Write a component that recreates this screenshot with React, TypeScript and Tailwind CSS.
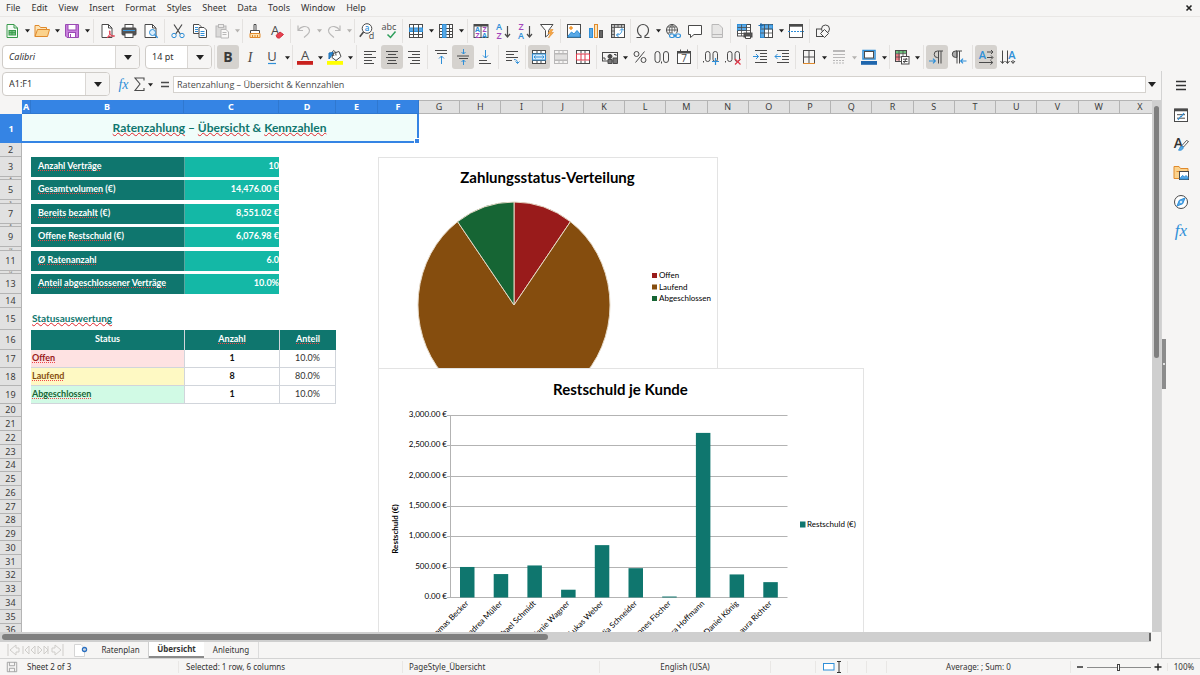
import React from "react";

const INK = "#4a4a4a";
const BLUE = "#2f8fd8";

/* ---------- icon drawings ---------- */

function Ic({ children, faded = false }: { children: React.ReactNode; faded?: boolean }) {
  return (
    <svg
      viewBox="0 0 16 16"
      className={faded ? "size-4 shrink-0 overflow-visible opacity-35" : "size-4 shrink-0 overflow-visible"}
      fill="none"
      stroke={INK}
      strokeWidth="1"
      aria-hidden="true"
    >
      {children}
    </svg>
  );
}

const T = ({ x, y, s = 7, c = INK, children, w = 400 }: any) => (
  <text x={x} y={y} fontSize={s} fill={c} fontWeight={w} stroke="none" textAnchor="middle" fontFamily="Open Sans, sans-serif">
    {children}
  </text>
);

const lines = (list: [number, number, number][]) => list.map(([x1, x2, y], i) => <path key={i} d={`M${x1} ${y}H${x2}`} />);

const I: Record<string, React.ReactNode> = {
  new: (
    <Ic>
      <path d="M3 1.500h7l3.500 3.500v9.500H3z" stroke="#3a9a4c" fill="#f4fbf5" />
      <path d="M10 1.500V5h3.500" stroke="#3a9a4c" />
      <rect x="5" y="7.500" width="6.500" height="4.500" fill="#7cc98a" stroke="#3a9a4c" />
      <path d="M5 9.700h6.500M8 7.500V12" stroke="#3a9a4c" />
    </Ic>
  ),
  open: (
    <Ic>
      <path d="M1 13.500V2.500h4l1.500 2h6V7" stroke="#e08a2c" fill="#fde3b4" />
      <path d="M1 13.500 3.500 6.500h12l-2 7z" stroke="#e08a2c" fill="#fbd28c" />
    </Ic>
  ),
  save: (
    <Ic>
      <path d="M1.500 1.500h13v13H3l-1.500-1.500z" stroke="#9a4bb3" fill="#c97fdd" />
      <rect x="4" y="1.500" width="8" height="5.500" fill="#fff" stroke="#9a4bb3" />
      <rect x="4.500" y="9.500" width="7" height="5" fill="#fff" stroke="#9a4bb3" />
      <path d="M6.500 11v3" stroke="#9a4bb3" />
    </Ic>
  ),
  pdf: (
    <Ic>
      <path d="M3 1.500h6.500L13 5v9.500H3z" fill="#fff" />
      <path d="M9.500 1.500V5H13" />
      <path d="M8 15c2-2 3.500-5 3-7-.8-1-1 2 1 4 1 1 2.500 1.800 3.500 1.200S13 12 8 14.500" stroke="#e0384a" fill="#fff" />
    </Ic>
  ),
  print: (
    <Ic>
      <rect x="4" y="1.500" width="8" height="4" fill="#fff" />
      <rect x="1" y="5" width="14" height="7" rx="1" fill="#555" />
      <path d="M2 7.500h12" stroke="#3d9be0" />
      <rect x="4" y="10" width="8" height="4.500" fill="#fff" />
    </Ic>
  ),
  preview: (
    <Ic>
      <path d="M2 1.500h7.500L13 5v9.500H2z" fill="#fff" />
      <path d="M9.500 1.500V5H13" />
      <circle cx="9.500" cy="9.500" r="3" stroke={BLUE} fill="#dceefb" />
      <path d="m11.700 11.700 3 3" stroke={BLUE} strokeWidth="1.400" />
    </Ic>
  ),
  cut: (
    <Ic>
      <path d="m4 1.500 6.300 9.500M12 1.500 5.700 11" strokeWidth="1.200" />
      <circle cx="4" cy="12.500" r="2.200" stroke={BLUE} />
      <circle cx="12" cy="12.500" r="2.200" stroke={BLUE} />
    </Ic>
  ),
  copy: (
    <Ic>
      <path d="M1.500 1.500h5.500l2 2v7H1.500z" fill="#fff" />
      <path d="M3 4.500h3M3 6.500h3M3 8.500h3" stroke={BLUE} />
      <path d="M7 4.500h5l2.500 2.500v7.500H7z" fill="#fff" />
      <path d="M8.500 8.500h4M8.500 10.500h4M8.500 12.500h4" stroke={BLUE} />
    </Ic>
  ),
  paste: (
    <Ic faded>
      <rect x="2" y="3" width="10" height="11" fill="#aaa" />
      <rect x="4.500" y="1.500" width="5" height="3" fill="#ddd" />
      <path d="M7 6.500h5l2.500 2.500v6H7z" fill="#fff" />
      <path d="M8.500 9.500h4M8.500 11.500h4" />
    </Ic>
  ),
  clone: (
    <Ic>
      <path d="M7 1.500h2v6H7z" fill="#fff" />
      <path d="M3.500 7.500h9v3h-9z" fill="#fff" />
      <path d="M3 10.500h10v4H3z" stroke="#e08a2c" fill="#fde3b4" />
      <path d="M5.500 12v2.500M8 12v2.500M10.500 12v2.500" stroke="#e08a2c" />
    </Ic>
  ),
  clear: (
    <Ic>
      <T x={6} y={11.500} s={13}>A</T>
      <path d="m7 12.500 4-3.500 3.500 2.500-4 3.500h-2z" fill="#e8414f" stroke="#cf2f3f" />
    </Ic>
  ),
  undo: (
    <Ic faded>
      <path d="M2 2.500v5h5M2 7.500C5 3 10 2.500 12.500 5c2.500 3 .5 6-4.500 9.500" strokeWidth="1.200" />
    </Ic>
  ),
  redo: (
    <Ic faded>
      <path d="M14 2.500v5H9M14 7.500C11 3 6 2.500 3.500 5c-2.500 3-.5 6 4.500 9.500" strokeWidth="1.200" />
    </Ic>
  ),
  find: (
    <Ic>
      <circle cx="8" cy="5.500" r="4.800" fill="#fff" />
      <path d="M4.500 9 .8 13.800" strokeWidth="1.600" />
      <T x={8} y={8} s={8} c={BLUE} w={600}>a</T>
      <T x={12.500} y={15.500} s={9}>d</T>
    </Ic>
  ),
  spell: (
    <Ic>
      <T x={8} y={7} s={9}>abc</T>
      <path d="m6.500 11.500 3 3 5-6" stroke="#2e9e5b" strokeWidth="1.500" />
    </Ic>
  ),
  row: (
    <Ic>
      <rect x="1.500" y="1.500" width="13" height="13" fill="#fff" />
      <rect x="1.500" y="5" width="13" height="3.500" fill="#5aa9e6" stroke={BLUE} />
      <path d="M1.500 11.500h13M5.500 1.500v13M10.500 1.500v13" />
    </Ic>
  ),
  col: (
    <Ic>
      <rect x="1.500" y="1.500" width="13" height="13" fill="#fff" />
      <path d="M1.500 5.500h13M1.500 8.500h13M1.500 11.500h13M11.500 1.500v13" />
      <rect x="4.500" y="1.500" width="3.500" height="13" fill="#5aa9e6" stroke={BLUE} />
    </Ic>
  ),
  sort: (
    <Ic>
      <rect x="1" y="1.500" width="14" height="13" fill="#fff" />
      <path d="M1 2.500h14" strokeWidth="2" />
      <path d="M8 2v12.500" />
      <T x={4.500} y={9} s={7} c={BLUE} w={700}>A</T>
      <T x={4.500} y={14.500} s={7} c="#a347ba" w={700}>Z</T>
      <T x={11.500} y={9} s={7} c="#a347ba" w={700}>Z</T>
      <T x={11.500} y={14.500} s={7} c={BLUE} w={700}>A</T>
    </Ic>
  ),
  az: (
    <Ic>
      <T x={4} y={7} s={9} c={BLUE} w={600}>A</T>
      <T x={4} y={15.500} s={9} c="#a347ba" w={600}>Z</T>
      <path d="M12.500 3v11M10 11l2.500 3 2.500-3" strokeWidth="1.200" />
    </Ic>
  ),
  za: (
    <Ic>
      <T x={4} y={7} s={9} c="#a347ba" w={600}>Z</T>
      <T x={4} y={15.500} s={9} c={BLUE} w={600}>A</T>
      <path d="M12.500 3v11M10 11l2.500 3 2.500-3" strokeWidth="1.200" />
    </Ic>
  ),
  filter: (
    <Ic>
      <path d="M1.500 1.500h12.500L9.500 7.500v4l-3 2.500V7.500z" fill="#fff" />
      <path d="M11.500 6.500 9 10.500h2.500L9.500 15l5-5.500H12l2-3z" fill="#f8a945" stroke="#e08a2c" strokeWidth=".6" />
    </Ic>
  ),
  image: (
    <Ic>
      <rect x="1.500" y="1.500" width="13" height="13" fill="#fff" />
      <path d="m2 13 3.500-4 2.500 2 3-3.500L14 11v3H2z" fill="#5aa9e6" stroke={BLUE} />
      <circle cx="5" cy="5" r="1.300" fill="#f8a945" stroke="#f0932b" />
    </Ic>
  ),
  chart: (
    <Ic>
      <rect x="1.500" y="5.500" width="3" height="9" fill="#5aa9e6" stroke={BLUE} />
      <rect x="6.500" y="1.500" width="3" height="13" fill="#fde3b4" stroke="#e08a2c" />
      <rect x="11.500" y="7.500" width="3" height="7" fill="#666" />
    </Ic>
  ),
  pivot: (
    <Ic>
      <rect x="1.500" y="1.500" width="13" height="13" fill="#fff" />
      <path d="M2 2h12v2H4v10H2z" fill="#bbb" stroke="none" />
      <path d="M1.500 4.500h13M4.500 1.500v13M8 1.500v3M11.500 1.500v3M1.500 8h3M1.500 11.500h3" strokeWidth=".8" />
      <path d="M12 6c0 4-2 6-5.500 6M10 7.500 12 5.500l2 2M8.500 10l-2 2 2 2" stroke={BLUE} />
    </Ic>
  ),
  omega: (
    <Ic>
      <path d="M1.500 14.500h4.500v-1.500C3.500 11.500 2.500 9.500 2.500 7a5.500 5.500 0 0 1 11 0c0 2.500-1 4.500-3.500 6v1.500h4.500" strokeWidth="1.200" />
    </Ic>
  ),
  link: (
    <Ic>
      <circle cx="7" cy="7" r="5.500" />
      <path d="M1.500 7h11M7 1.500v11M2.500 4h9M2.500 10h5M7 1.500c-3.500 3-3.500 8 0 11M7 1.500c3.500 3 3 6 2.500 7" strokeWidth=".8" />
      <rect x="4" y="10.500" width="12" height="5" fill="#f6f5f4" stroke="none" />
      <rect x="4.500" y="11" width="5" height="3.500" rx="1.700" stroke={BLUE} strokeWidth="1.200" />
      <rect x="10.500" y="11" width="5" height="3.500" rx="1.700" stroke={BLUE} strokeWidth="1.200" />
      <path d="M8 12.800h4" stroke={BLUE} />
    </Ic>
  ),
  comment: (
    <Ic>
      <path d="M1.500 2.500h13v9H7l-3.500 3v-3h-2z" fill="#fff" />
    </Ic>
  ),
  header: (
    <Ic faded>
      <path d="M3 1.500h7L13.500 5v9.500H3z" fill="#ccc" />
      <path d="M3 11.500h10" />
    </Ic>
  ),
  printrange: (
    <Ic>
      <rect x="1.500" y="1.500" width="13" height="11.500" fill="#fff" />
      <rect x="1.500" y="1.500" width="9" height="6" fill="#5aa9e6" stroke={BLUE} />
      <path d="M1.500 4.500h13M1.500 7.500h13M1.500 10.500h13M5.500 1.500v11.500M10.500 1.500v11.500" strokeWidth=".8" />
      <rect x="8" y="10" width="8" height="4" fill="#555" />
      <path d="M9.500 13h5v2.500h-5z" fill="#fff" />
    </Ic>
  ),
  freeze: (
    <Ic>
      <rect x="2.500" y="1.500" width="12" height="13" fill="#fff" />
      <path d="M2.500 2h12v4h-8v8.500h-4z" fill="#5aa9e6" stroke={BLUE} />
      <path d="M2.500 6h12M2.500 10h12M6.500 1.500v13M10.500 1.500v13" strokeWidth=".8" />
      <path d="M3 0v5M.5 2.500h5" stroke="#1b6db3" />
    </Ic>
  ),
  split: (
    <Ic>
      <rect x="1.500" y="1.500" width="13" height="13" fill="#fff" />
      <path d="M1.500 2.500h13" strokeWidth="2.400" />
      <path d="M0 8.500h16" stroke={BLUE} strokeDasharray="2 1" />
    </Ic>
  ),
  shapes: (
    <Ic>
      <rect x="1.500" y="6" width="8" height="7.500" />
      <circle cx="10.500" cy="6" r="4" fill="#f6f5f4" />
      <path d="m9.500 6.500 4 4-4 4-4-4z" fill="#f6f5f4" />
    </Ic>
  ),
  bold: (
    <Ic>
      <T x={8} y={13} s={14} w={700} c="#3a3a3a">B</T>
    </Ic>
  ),
  italic: (
    <Ic>
      <text x="8" y="13" fontSize="14" fontStyle="italic" textAnchor="middle" fill={INK} stroke="none" fontFamily="Liberation Serif, serif">I</text>
    </Ic>
  ),
  underline: (
    <Ic>
      <T x={8} y={12} s={13}>U</T>
      <path d="M4 14.500h8" stroke={BLUE} strokeWidth="1.200" />
    </Ic>
  ),
  fontcolor: (
    <Ic>
      <T x={8} y={10.500} s={13}>A</T>
      <rect x="0" y="12" width="16" height="3.800" fill="#c9211e" stroke="none" />
    </Ic>
  ),
  highlight: (
    <Ic>
      <path d="m6 4.500 6-2 2 5-5 4-4-3z" fill="#fff" />
      <path d="M9 6.500c0-3-1.500-5-2.500-5S5 4 7 7" />
      <path d="M2 10V4l4-.5-1.500 3L3.500 8z" fill={BLUE} stroke="#1b6db3" />
      <rect x="0" y="12" width="16" height="3.800" fill="#ffff00" stroke="none" />
    </Ic>
  ),
  left: <Ic>{lines([[2, 14, 2.5], [2, 10, 5.5], [2, 14, 8.5], [2, 10, 11.5], [2, 12, 14.5]])}</Ic>,
  center: <Ic>{lines([[2, 14, 2.5], [4, 12, 5.5], [2, 14, 8.5], [4, 12, 11.5], [3, 13, 14.5]])}</Ic>,
  right: <Ic>{lines([[2, 14, 2.5], [6, 14, 5.5], [2, 14, 8.5], [6, 14, 11.5], [4, 14, 14.5]])}</Ic>,
  top: (
    <Ic>
      {lines([[2, 14, 1.5], [4, 14, 4.5]])}
      <path d="M8.500 15V7M6 9.500 8.500 7 11 9.500" stroke={BLUE} />
    </Ic>
  ),
  middle: (
    <Ic>
      {lines([[2, 14, 7], [4, 13, 9.5]])}
      <path d="M8.500 0v5M6.500 3l2 2 2-2M8.500 16v-5M6.500 13l2-2 2 2" stroke={BLUE} />
    </Ic>
  ),
  bottom: (
    <Ic>
      {lines([[2, 10, 11.5], [2, 14, 14.5]])}
      <path d="M8.500 1v8M6 6.500 8.500 9 11 6.500" stroke={BLUE} />
    </Ic>
  ),
  wrap: (
    <Ic>
      {lines([[2, 14, 2.5], [2, 10, 5.5], [2, 14, 8.5], [2, 8, 11.5]])}
      <path d="M10 10.500c2.500 0 3.500 1 3.500 4M11.500 12.500l2 2 2-2" stroke={BLUE} />
    </Ic>
  ),
  merge: (
    <Ic>
      <rect x="1.500" y="1.500" width="13" height="13" fill="#fff" />
      <path d="M1.500 4.500h13M1.500 11.500h13M6 1.500v3M10 1.500v3M6 11.500v3M10 11.500v3" />
      <rect x="1.500" y="5" width="13" height="6" fill="#d8ecfb" stroke={BLUE} />
      <path d="M3 8h10M4.500 6.500 3 8l1.500 1.500M11.500 6.500 13 8l-1.500 1.500" stroke={BLUE} />
    </Ic>
  ),
  mergecells: (
    <Ic faded>
      <rect x="1.500" y="1.500" width="13" height="13" />
      <path d="M1.500 4.500h13M1.500 11.500h13M6 1.500v3M10 1.500v3M6 11.500v3M10 11.500v3" />
      <rect x="1.500" y="5" width="13" height="6" fill="#bbb" />
    </Ic>
  ),
  splitcells: (
    <Ic>
      <rect x="1.500" y="1.500" width="13" height="13" fill="#fff" />
      <path d="M6 1.500v3M10 1.500v3M6 11.500v3M10 11.500v3" />
      <path d="M1.500 5h13v6h-13zM6 5v6M10 5v6" fill="#fff" stroke="#e0384a" />
    </Ic>
  ),
  currency: (
    <Ic>
      <rect x=".5" y="3.500" width="15" height="8.500" />
      <circle cx="8" cy="7.500" r="2" fill={INK} />
      <path d="M2 8v2h2M14 7V5.500h-2" />
      <path d="M6 10.500h4v4H6zM11 9h4.500v5.500H11z" fill="#777" />
    </Ic>
  ),
  percent: (
    <Ic>
      <circle cx="4.500" cy="5" r="2.500" />
      <circle cx="11.500" cy="11" r="2.500" />
      <path d="M12.500 2.500 3.500 13.500" />
    </Ic>
  ),
  number: (
    <Ic>
      <rect x="1" y="2.500" width="5" height="11" rx="2.500" />
      <rect x="9.500" y="2.500" width="5" height="11" rx="2.500" />
      <path d="M7.500 12.500v2" />
    </Ic>
  ),
  date: (
    <Ic>
      <rect x="1.500" y="2.500" width="13" height="12" fill="#fff" />
      <path d="M1.500 3.500h13" strokeWidth="2" />
      <path d="M4.500.5v3M11.500.5v3" />
      <T x={8} y={13} s={10}>7</T>
    </Ic>
  ),
  addDec: (
    <Ic>
      <path d="M.5 12v1.500" />
      <rect x="2.500" y="2.500" width="4.500" height="10" rx="2.200" />
      <rect x="10" y="2.500" width="4.500" height="10" rx="2.200" />
      <path d="M12.500 9v7M9 12.500h7" stroke={BLUE} strokeWidth="1.200" />
    </Ic>
  ),
  delDec: (
    <Ic>
      <path d="M.5 12v1.500" />
      <rect x="2.500" y="2.500" width="4.500" height="10" rx="2.200" />
      <rect x="10" y="2.500" width="4.500" height="10" rx="2.200" />
      <path d="m10 10 5.500 5.500M15.500 10 10 15.500" stroke="#e0384a" strokeWidth="1.200" />
    </Ic>
  ),
  indent: (
    <Ic>
      {lines([[3, 15, 1.5], [8, 15, 4.5], [8, 15, 7.5], [8, 15, 10.5], [3, 15, 13.5]])}
      <path d="M1 7.500h5.500M4 5l2.500 2.500L4 10" stroke={BLUE} />
    </Ic>
  ),
  outdent: (
    <Ic>
      {lines([[3, 15, 1.5], [8, 15, 4.5], [8, 15, 7.5], [8, 15, 10.5], [3, 15, 13.5]])}
      <path d="M7 7.500H1M3.500 5 1 7.500 3.500 10" stroke={BLUE} />
    </Ic>
  ),
  borders: (
    <Ic>
      <path d="M2 1.500h12M2 8h12M2.500 1.500v13M8 1.500v13M13.500 1.500v13" />
      <path d="M2 14.500h12" stroke="#e08a2c" />
    </Ic>
  ),
  borderstyle: (
    <Ic faded>
      <path d="M2 2h12" strokeWidth="2" />
      <path d="M2 5.500h12M2 8.500h12" />
      <path d="M2 11.500h12M2 14h12" strokeDasharray="2 1" />
    </Ic>
  ),
  bordercolor: (
    <Ic>
      <rect x="2" y="1.500" width="12" height="8.500" fill="#fff" stroke={BLUE} strokeWidth="1.500" />
      <rect x="3.500" y="2.500" width="9" height="6.500" />
      <rect x="0" y="12" width="16" height="3.800" fill="#1f66ad" stroke="none" />
    </Ic>
  ),
  cond: (
    <Ic>
      <rect x="1.500" y="1.500" width="11" height="11" fill="#fff" />
      <path d="M2 2h10v2.500H2z" fill="#6cc17c" stroke="none" />
      <path d="M2 5h4v6.500H2z" fill="#ee7b85" stroke="none" />
      <path d="M1.500 4.700h11M1.500 8h11M5 1.500v11M9 1.500v11" strokeWidth=".8" />
      <rect x="7.500" y="7.500" width="7.500" height="7.500" fill="#fff" />
      <path d="M9 10.200h4.500M9 12.500h4.500M12.500 9 10 14" />
    </Ic>
  ),
  ltr: (
    <Ic>
      <path d="M14 2H8.500a3.300 3.300 0 0 0 0 6.600H9M9.500 2v12.500M12 2v12.500" />
      <path d="M0 12h6M4 9.700 6.300 12 4 14.300" stroke={BLUE} strokeWidth="1.200" />
    </Ic>
  ),
  rtl: (
    <Ic>
      <path d="M6 2H4.500a3.200 3.200 0 0 0 0 6.400H6z" fill="#aaa" />
      <path d="M11 2H5M6 2v12.500M8.500 2v12.500" />
      <path d="M15.500 12H10M12 9.700 9.700 12l2.300 2.300" stroke={BLUE} strokeWidth="1.200" />
    </Ic>
  ),
  horiz: (
    <Ic>
      <T x={4.500} y={10} s={11} c={BLUE} w={600}>A</T>
      <path d="M9 3h5.500M13 1l2 2-2 2M9 8.500h5.500M13 6.500l2 2-2 2M1 13.500h13.500M12.500 11.500l2.300 2-2.300 2" />
    </Ic>
  ),
  vert: (
    <Ic>
      <T x={12} y={9.500} s={11} c={BLUE} w={600}>A</T>
      <path d="M2.500 1.500V14M.5 12l2 2.500 2-2.500M7.500 1.500V14M5.500 12l2 2.500 2-2.500M13 11v3M11 12l2 2.500 2-2.500" />
    </Ic>
  ),
  fx: (
    <Ic>
      <text x="7.500" y="12.500" fontSize="14" fontStyle="italic" textAnchor="middle" fill={BLUE} stroke="none" fontFamily="Liberation Serif, serif">fx</text>
    </Ic>
  ),
  sigma: (
    <Ic>
      <path d="M12 4.500V2H3l5 6-5 6.500h9V12" strokeWidth="1.100" />
    </Ic>
  ),
  equals: (
    <Ic>
      <path d="M4 6.500h8M4 10.500h8" strokeWidth="1.600" />
    </Ic>
  ),
  burger: (
    <Ic>
      <path d="M3 3.500h10M3 7.500h10M3 11.500h10" strokeWidth="1.600" stroke="#333" />
    </Ic>
  ),
  props: (
    <Ic>
      <rect x="1.500" y="2" width="13" height="12.500" fill="#fff" />
      <path d="M1.500 3h13" strokeWidth="2.600" />
      <path d="M4 7.700h8M4 11.200h8" />
      <path d="m8 10 3-4M5 13l3-4" stroke={BLUE} strokeWidth="1.200" />
    </Ic>
  ),
  stylesA: (
    <Ic>
      <T x={5.500} y={12} s={14} c="#333" w={600}>A</T>
      <path d="M15.500 5.500 10.500 11l-1.500-1.500 4.500-5z" fill="#fff" strokeWidth=".9" />
      <path d="M10 10.500c-1-1-3 0-3.500 2-.3 1.200-1 1.500-1 1.500 2.500 1 5.500-1 4.500-3.500z" fill="#5aa9e6" stroke={BLUE} />
    </Ic>
  ),
  gallery: (
    <Ic>
      <path d="M1 13.500v-12h5l1.500 2h7.500v10z" stroke="#e08a2c" fill="#fbd28c" />
      <path d="M3.500 6.500H15" stroke="#e08a2c" />
      <rect x="6.500" y="6.500" width="9" height="8" fill="#fff" />
      <path d="m7 13.500 2.500-3 2 1.500 1.500-1.500 2 2V14H7z" fill="#5aa9e6" stroke={BLUE} />
    </Ic>
  ),
  navigator: (
    <Ic>
      <circle cx="8" cy="8" r="6.500" fill="#fff" />
      <path d="M12 4 9.700 9.700 4 12l2.300-5.700z" fill="#5aa9e6" stroke={BLUE} />
      <circle cx="8" cy="8" r="1" fill="#fff" stroke="none" />
    </Ic>
  ),
  functions: (
    <Ic>
      <text x="8" y="12.500" fontSize="17" fontStyle="italic" textAnchor="middle" fill={BLUE} stroke="none" fontFamily="Liberation Serif, serif">fx</text>
    </Ic>
  ),
};

/* ---------- toolbar pieces ---------- */

function Caret({ faded = false, big = false }: { faded?: boolean; big?: boolean }) {
  return (
    <svg viewBox="0 0 8 8" className={big ? "size-2 shrink-0" : "size-[5px] shrink-0"} aria-hidden="true">
      <path d="M0 2h8L4 7z" fill={faded ? "#b5b3b0" : "#222"} />
    </svg>
  );
}

function Btn({ icon, label, active = false, split = false, faded = false }: any) {
  return (
    <div className="flex shrink-0 items-center">
      <button
        type="button"
        aria-label={label}
        aria-pressed={active}
        className={
          active
            ? "flex h-6 w-[22px] items-center justify-center rounded-[3px] bg-[#d5d2ce]"
            : "flex h-6 w-[22px] items-center justify-center rounded-[3px]"
        }
      >
        {I[icon]}
      </button>
      {split && (
        <button type="button" aria-label={label + " options"} className="flex h-6 w-2 items-center justify-center">
          <Caret faded={faded} />
        </button>
      )}
    </div>
  );
}

const Sep = ({ thin = false }: { thin?: boolean }) => (
  <div className={thin ? "flex w-[3px] shrink-0 justify-center" : "flex w-[5px] shrink-0 justify-center"}>
    <div className="h-6 w-px bg-[#e4e2e0]" />
  </div>
);

type Tool = [string, string, string?] | "|" | "!";
const standard: Tool[] = [
  ["new", "New", "s"], ["open", "Open", "s"], ["save", "Save", "s"], "|",
  ["pdf", "Export as PDF"], ["print", "Print"], ["preview", "Print Preview"], "|",
  ["cut", "Cut"], ["copy", "Copy"], ["paste", "Paste", "sf"], "!",
  ["clone", "Clone Formatting"], ["clear", "Clear Formatting"], "|",
  ["undo", "Undo", "sf"], ["redo", "Redo", "sf"], "!",
  ["find", "Find and Replace"], ["spell", "Spelling"], "|",
  ["row", "Row", "s"], ["col", "Column", "s"], "|",
  ["sort", "Sort"], ["az", "Sort Ascending"], ["za", "Sort Descending"], ["filter", "AutoFilter"], "|",
  ["image", "Insert Image"], ["chart", "Insert Chart"], ["pivot", "Insert Pivot Table"], "!",
  ["omega", "Special Character", "s"], ["link", "Insert Hyperlink"], ["comment", "Insert Comment"], ["header", "Headers and Footers"], "|",
  ["printrange", "Define Print Area"], ["freeze", "Freeze Rows and Columns", "s"], ["split", "Split Window"], "|",
  ["shapes", "Show Draw Functions"],
];
const formatting: Tool[] = [
  ["bold", "Bold", "a"], ["italic", "Italic"], ["underline", "Underline", "s"], "!",
  ["fontcolor", "Font Color", "s"], ["highlight", "Background Color", "s"], "|",
  ["left", "Align Left"], ["center", "Center Horizontally", "a"], ["right", "Align Right"], "|",
  ["top", "Align Top"], ["middle", "Center Vertically", "a"], ["bottom", "Align Bottom"], "|",
  ["wrap", "Wrap Text"], "|",
  ["merge", "Merge and Center", "a"], ["mergecells", "Merge Cells"], ["splitcells", "Unmerge Cells"], "|",
  ["currency", "Format as Currency", "s"], ["percent", "Format as Percent"], ["number", "Format as Number"], ["date", "Format as Date"], "|",
  ["addDec", "Add Decimal Place"], ["delDec", "Delete Decimal Place"], "|",
  ["indent", "Increase Indent"], ["outdent", "Decrease Indent"], "|",
  ["borders", "Borders", "s"], ["borderstyle", "Border Style", "sf"], ["bordercolor", "Border Color", "s"], "!",
  ["cond", "Conditional Formatting", "s"], "|",
  ["ltr", "Left-to-Right", "a"], ["rtl", "Right-to-Left"], "|",
  ["horiz", "Text Direction Horizontal", "a"], ["vert", "Text Direction Vertical"],
];

const Tools = ({ items }: { items: Tool[] }) => (
  <>
    {items.map((t, i) =>
      t === "|" || t === "!" ? (
        <Sep key={i} thin={t === "!"} />
      ) : (
        <Btn
          key={i}
          icon={t[0]}
          label={t[1]}
          active={!!t[2]?.includes("a")}
          split={!!t[2]?.includes("s")}
          faded={!!t[2]?.includes("f")}
        />
      ),
    )}
  </>
);

function Combo({ label, value, italic = false, wide }: { label: string; value: string; italic?: boolean; wide: string }) {
  return (
    <div className={"flex h-6 shrink-0 overflow-hidden rounded-[4px] border border-[#cfccc8] bg-white " + wide}>
      <input
        aria-label={label}
        defaultValue={value}
        className={italic ? "min-w-0 flex-1 bg-transparent pl-1.5 italic outline-none" : "min-w-0 flex-1 bg-transparent pl-1.5 outline-none"}
      />
      <button
        type="button"
        aria-label={label + " list"}
        className="flex w-6 items-center justify-center border-l border-[#dad7d4] bg-[#f6f5f4]"
      >
        <Caret big />
      </button>
    </div>
  );
}

/* ---------- sheet ---------- */

const cols = "ABCDEFGHIJKLMNOPQRSTUVWX".split("");

const kpis: Record<number, [string, string]> = {
  3: ["Anzahl Verträge", "10"],
  5: ["Gesamtvolumen (€)", "14,476.00 €"],
  7: ["Bereits bezahlt (€)", "8,551.02 €"],
  9: ["Offene Restschuld (€)", "6,076.98 €"],
  11: ["Ø Ratenanzahl", "6.0"],
  13: ["Anteil abgeschlossener Verträge", "10.0%"],
};

const statuses: Record<number, [string, string, string, string]> = {
  17: ["Offen", "1", "10.0%", "bg-[#fee2e2] text-[#991b1b]"],
  18: ["Laufend", "8", "80.0%", "bg-[#fef9c3] text-[#854d0e]"],
  19: ["Abgeschlossen", "1", "10.0%", "bg-[#d1fae5] text-[#166534]"],
};

function rowHeight(n: number) {
  if (n === 1) return "h-[29px]";
  if (n === 2 || n === 14) return "h-[14px]";
  if (n === 4 || n === 8 || n === 12) return "h-[3px]";
  if (n === 6 || n === 10) return "h-[4px]";
  if (n < 14 || n === 16) return "h-[20px]";
  if (n === 15) return "h-[22px]";
  if (n < 20) return "h-[18px]";
  return n % 4 === 0 ? "h-[13px]" : "h-[14px]";
}

/* Marks every word the spell checker does not know. */
function Spell({ text, large = false }: { text: string; large?: boolean }) {
  const mark = large
    ? "underline decoration-[#e0262c] decoration-wavy decoration-1 underline-offset-0 [text-decoration-skip-ink:none]"
    : "underline decoration-[#f0454a] decoration-dotted decoration-1 underline-offset-1 [text-decoration-skip-ink:none]";
  return (
    <>
      {text.split(" ").map((w, i) => (
        <React.Fragment key={i}>
          {i > 0 && " "}
          {/^[A-Za-zÀ-ž]{2,}$/.test(w) || w === "Ø" ? <span className={mark}>{w}</span> : w}
        </React.Fragment>
      ))}
    </>
  );
}

function SheetRow({ n }: { n: number }) {
  const tiny = [4, 6, 8, 10, 12].includes(n);
  const head = n === 1 ? "bg-[#3584e4] font-bold text-white" : "border-r border-b border-[#b4b4b4] bg-[#e1e1e1] text-[#3c3c3c]";
  let cells: React.ReactNode = <td colSpan={24} className="p-0" />;
  if (n === 1) {
    cells = (
      <>
        <td colSpan={6} className="relative border-b-2 border-r-2 border-[#3584e4] bg-[#f0fdfa] p-0 text-center text-[12px] font-bold text-[#0f766e]">
          <Spell large text="Ratenzahlung – Übersicht & Kennzahlen" />
          <span className="absolute -right-0.5 -bottom-0.5 size-1 bg-[#3584e4] outline outline-white" />
        </td>
        <td colSpan={18} className="p-0" />
      </>
    );
  } else if (kpis[n]) {
    cells = (
      <>
        <td className="p-0" />
        <td className="bg-[#0f766e] pt-0 pr-0 pb-0.5 pl-[7px] text-[9px] font-bold text-white"><Spell text={kpis[n][0]} /></td>
        <td className="border-l border-[#5aa59f] bg-[#14b8a6] px-0 pt-0 pb-0.5 text-right text-[9px] font-bold text-white">{kpis[n][1]}</td>
        <td colSpan={21} className="p-0" />
      </>
    );
  } else if (n === 15) {
    cells = (
      <>
        <td className="p-0" />
        <td className="pt-0 pr-0 pb-0.5 pl-px text-[10px] font-bold text-[#0f766e]"><Spell large text="Statusauswertung" /></td>
        <td colSpan={22} className="p-0" />
      </>
    );
  } else if (n === 16) {
    cells = (
      <>
        <td className="p-0" />
        <td className="bg-[#0f766e] px-0 pt-0 pb-0.5 text-center text-[9px] font-bold text-white">Status</td>
        <td className="border-l border-[#d1d5db] bg-[#0f766e] px-0 pt-0 pb-0.5 text-center text-[9px] font-bold text-white"><Spell text="Anzahl" /></td>
        <td className="border-l border-[#d1d5db] bg-[#0f766e] px-0 pt-0 pb-0.5 text-center text-[9px] font-bold text-white"><Spell text="Anteil" /></td>
        <td colSpan={20} className="p-0" />
      </>
    );
  } else if (statuses[n]) {
    const [name, count, share, tone] = statuses[n];
    cells = (
      <>
        <td className="p-0" />
        <td className={"border-b border-[#d1d5db] pt-0 pr-0 pb-0.5 pl-px text-[9px] font-bold " + tone}><Spell text={name} /></td>
        <td className="border-b border-l border-[#d1d5db] px-0 pt-0 pb-0.5 text-center text-[9px] font-bold text-[#111]">{count}</td>
        <td className="border-x border-b border-[#d1d5db] px-0 pt-0 pb-0.5 text-center text-[9px] text-[#333]">{share}</td>
        <td colSpan={20} className="p-0" />
      </>
    );
  }
  return (
    <tr className={rowHeight(n)}>
      <th scope="row" className={"overflow-hidden p-0 text-center [font-family:'Noto_Sans',sans-serif] " + (n === 1 ? "" : "font-normal ") + head}>
        {tiny ? <div className="h-0.5 overflow-hidden text-[3px] leading-[2px]">{n}</div> : <div className="text-[9px] leading-[12px]">{n}</div>}
      </th>
      {cells}
    </tr>
  );
}

const slices: [string, string, number, number][] = [
  ["Offen", "#991b1b", 0, 0.1],
  ["Laufend", "#854d0e", 0.1, 0.9],
  ["Abgeschlossen", "#166534", 0.9, 1],
];

function PieChart() {
  const pt = (f: number) => `${136 + 96 * Math.sin(f * 2 * Math.PI)} ${148 - 103 * Math.cos(f * 2 * Math.PI)}`;
  return (
    <svg viewBox="0 0 340 270" className="absolute top-[57px] left-[378px] h-[270px] w-[340px] bg-white" fontFamily="Lato, sans-serif">
      <rect x=".5" y=".5" width="339" height="269" fill="#fff" stroke="#e3e3e3" />
      <text x="169.500" y="26" textAnchor="middle" fontSize="15" fontWeight="700">Zahlungsstatus-Verteilung</text>
      {slices.map(([name, color, a, b]) => (
        <path key={name} d={`M136 148L${pt(a)}A96 103 0 ${b - a > 0.5 ? 1 : 0} 1 ${pt(b)}Z`} fill={color} stroke="#e6d9c6" strokeWidth="1" />
      ))}
      {slices.map(([name, color], i) => (
        <g key={name}>
          <rect x="274" y={116 + i * 11.5} width="5" height="5" fill={color} />
          <text x="281" y={121 + i * 11.5} fontSize="8">{name}</text>
        </g>
      ))}
    </svg>
  );
}

const debts: [string, number][] = [
  ["Thomas Becker", 495], ["Andrea Müller", 378], ["Michael Schmidt", 520], ["Stefanie Wagner", 120], ["Lukas Weber", 855],
  ["Julia Schneider", 475], ["Johannes Fischer", 8], ["Petra Hoffmann", 2705], ["Daniel König", 372], ["Laura Richter", 245],
];

function BarChart() {
  const y = (v: number) => 229 - (v * 182) / 3000;
  return (
    <svg viewBox="0 0 486 320" className="absolute top-[268px] left-[378px] h-[320px] w-[486px] bg-white" fontFamily="Lato, sans-serif">
      <rect x=".5" y=".5" width="485" height="319" fill="#fff" stroke="#e3e3e3" />
      <text x="242.500" y="27" textAnchor="middle" fontSize="15" fontWeight="700">Restschuld je Kunde</text>
      <text transform="translate(20 161) rotate(-90)" textAnchor="middle" fontSize="8" fontWeight="700">Restschuld (€)</text>
      {[0, 500, 1000, 1500, 2000, 2500, 3000].map((v) => (
        <g key={v}>
          <path d={`M69 ${Math.round(y(v)) + 0.5}H409.500`} stroke="#b3b3b3" />
          <text x="69" y={y(v) + 2} textAnchor="end" fontSize="8">
            {v.toLocaleString("en-US", { minimumFractionDigits: 2 }) + " €"}
          </text>
        </g>
      ))}
      <path d="M72.500 47v182" stroke="#b3b3b3" />
      {debts.map(([name, v], i) => (
        <g key={name}>
          <rect x={82 + i * 33.7} y={y(v)} width="14.500" height={229.5 - y(v)} fill="#0f766e" />
          <text transform={`translate(${91 + i * 33.7} 236) rotate(-45)`} textAnchor="end" fontSize="8">{name}</text>
        </g>
      ))}
      <rect x="422" y="153.500" width="5.500" height="6" fill="#0f766e" />
      <text x="429" y="158.500" fontSize="8">Restschuld (€)</text>
    </svg>
  );
}

function Sheet() {
  return (
    <div className="relative min-w-0 flex-1 overflow-hidden bg-white">
      <table className="w-[calc(100%+9px)] table-fixed border-separate border-spacing-0 [font-family:Lato,sans-serif]">
        <colgroup>
          <col className="w-[22px]" /><col className="w-[9px]" /><col className="w-[153px]" /><col className="w-[95px]" />
          <col className="w-[57px]" /><col className="w-[42px]" /><col className="w-[41px]" />
          {cols.slice(6).map((c) => <col key={c} />)}
        </colgroup>
        <thead>
          <tr className="h-[14px] text-[9px] leading-[12px] [font-family:'Noto_Sans',sans-serif]">
            <th aria-label="Select all" className="bg-[#f6f5f4] p-0" />
            {cols.map((c, i) => (
              <th
                key={c}
                scope="col"
                className={
                  i < 6
                    ? "border-r border-b border-[#2f78d0] bg-[#3584e4] p-0 text-center font-bold text-white"
                    : "border-t border-r border-b border-[#b4b4b4] bg-[#e1e1e1] p-0 text-center font-normal text-[#3c3c3c]"
                }
              >
                {c}
              </th>
            ))}
          </tr>
        </thead>
        <tbody>
          {Array.from({ length: 36 }, (_, i) => <SheetRow key={i} n={i + 1} />)}
        </tbody>
      </table>
      <PieChart />
      <BarChart />
    </div>
  );
}

/* ---------- window ---------- */

const menus = ["File", "Edit", "View", "Insert", "Format", "Styles", "Sheet", "Data", "Tools", "Window", "Help"];
const navArrows = ["M2 1v12M10 2 4 7l6 5V9h3V5h-3z", "M2 3v8M8 3 4 7l4 4zM14 3l-4 4 4 4z", "M12 3v8M2 3l4 4-4 4zM8 3l4 4-4 4z", "M12 1v12M4 2l6 5-6 5V9H1V5h3z"];

export default function App() {
  return (
    <div className="flex h-screen flex-col overflow-hidden bg-[#f6f5f4] text-[9px] leading-[12px] text-[#333] [font-family:'Noto_Sans',sans-serif]">
      <header className="flex h-[17px] shrink-0 items-center border-b border-[#e9e7e5] pl-1.5 pr-[7px]">
        <nav className="flex flex-1 gap-[11px]">
          {menus.map((m) => <button key={m} type="button">{m}</button>)}
        </nav>
        <button type="button" aria-label="Close document">
          <svg viewBox="0 0 8 8" className="size-2"><path d="m1.500 1.500 5 5M6.500 1.500l-5 5" stroke="#222" strokeWidth="1.600" /></svg>
        </button>
      </header>

      <div role="toolbar" aria-label="Standard" className="flex h-[27px] shrink-0 items-center pl-px">
        <Tools items={standard} />
      </div>
      <div role="toolbar" aria-label="Formatting" className="flex h-[27px] shrink-0 items-center pb-px pl-0.5">
        <Combo label="Font Name" value="Calibri" italic wide="w-[138px]" />
        <div className="w-[5px] shrink-0" />
        <Combo label="Font Size" value="14 pt" wide="w-[67px]" />
        <Sep />
        <Tools items={formatting} />
      </div>

      <div className="flex min-h-0 flex-1">
        <main className="flex min-w-0 flex-1 flex-col">
          <div className="flex h-[29px] shrink-0 items-center pb-[3px] pl-0.5">
            <Combo label="Name Box" value="A1:F1" wide="w-[108px]" />
            <div className="flex items-center pl-1.5">
              <button type="button" aria-label="Function Wizard">{I.fx}</button>
              <button type="button" aria-label="Select Function" className="flex items-center">{I.sigma}<Caret /></button>
              <button type="button" aria-label="Formula" className="pl-1">{I.equals}</button>
            </div>
            <input
              aria-label="Input line"
              defaultValue="Ratenzahlung – Übersicht & Kennzahlen"
              className="h-[17px] min-w-0 flex-1 border border-[#d5d2ce] bg-white pl-[3px] text-[#4a4a4a] outline-none [font-family:'Open_Sans',sans-serif]"
            />
            <button type="button" aria-label="Expand Formula Bar" className="flex w-[15px] items-center pl-0.5"><Caret big /></button>
          </div>

          <div className="flex min-h-0 flex-1">
            <Sheet />
            <div className="w-[9px] shrink-0 bg-[#cfcfcf] px-0.5 pt-[6px]">
              <div className="h-[48%] rounded-full bg-[#7f7f7f]" />
            </div>
          </div>

          <div className="flex h-[10px] shrink-0">
            <div className="flex flex-1 items-center bg-[#cfcfcf] pl-0.5">
              <div className="h-[6px] w-[47.5%] rounded-full bg-[#7f7f7f]" />
              <div className="ml-auto h-2 w-0.5 bg-[#666]" />
            </div>
            <div className="w-[10px]" />
          </div>

          <div className="flex h-4 shrink-0 items-stretch pl-1.5 text-[8px]">
            <div className="flex items-center">
              {navArrows.map((d, i) => (
                <button key={i} type="button" aria-label={["First Sheet", "Previous Sheet", "Next Sheet", "Last Sheet"][i]}>
                  <svg viewBox="0 0 15 14" className="h-[14px] w-[15px]" fill="none" stroke="#cfcdca"><path d={d} /></svg>
                </button>
              ))}
            </div>
            <button type="button" aria-label="Add Sheet" className="pl-2">
              <svg viewBox="0 0 14 14" className="size-[14px]" fill="none">
                <path d="M.5 1.500h6.500L10.500 5v8.500H.5z" fill="#fff" stroke="#d5d5d5" />
                <circle cx="10.500" cy="6.500" r="2" stroke="#2a6fc0" strokeWidth="1.400" />
              </svg>
            </button>
            <div role="tablist" className="flex items-stretch pl-[5px]">
              <button type="button" role="tab" className="w-[56px] border-r border-[#cfcfcf]">Ratenplan</button>
              <button type="button" role="tab" aria-selected="true" className="w-[55px] border-b-2 border-[#8a8a8a] bg-white font-bold">Übersicht</button>
              <button type="button" role="tab" className="w-[55px] border-r border-[#dcdcdc]">Anleitung</button>
            </div>
          </div>
        </main>

        <aside className="relative flex w-[39px] shrink-0 flex-col items-center gap-[13px] border-l border-[#d3d3d3] pt-[7px]">
          {[["burger", "Sidebar Settings"], ["props", "Properties"], ["stylesA", "Styles"], ["gallery", "Gallery"], ["navigator", "Navigator"], ["functions", "Functions"]].map(([k, l]) => (
            <button key={k} type="button" aria-label={l}>{I[k]}</button>
          ))}
          <button type="button" aria-label="Show sidebar" className="absolute top-[268px] left-0 flex h-[50px] w-1 items-center justify-center bg-[#8c8c8c]">
            <span className="size-0.5 rounded-full bg-white" />
          </button>
        </aside>
      </div>

      <footer className="grid h-[17px] shrink-0 grid-cols-[22px_157fr_224fr_197fr_171fr_45fr_32px_19px_20px_184fr_97px_32px] items-center border-t border-[#d3d3d3] text-[8px]">
        <svg viewBox="0 0 14 14" className="ml-1.5 size-3" fill="none" stroke="#9a9a9a">
          <path d="M1.500 1.500h11v11h-11zM4 1.500v4h6v-4M4 12.500v-4h6v4" />
        </svg>
        <span className="border-r border-[#e9e7e5] pl-[5px]">Sheet 2 of 3</span>
        <span className="border-r border-[#e9e7e5] pl-[7px]">Selected: 1 row, 6 columns</span>
        <span className="border-r border-[#e9e7e5] pl-[6px]">PageStyle_Übersicht</span>
        <span className="border-r border-[#e9e7e5] text-center">English (USA)</span>
        <span className="h-3 border-r border-[#e9e7e5]" />
        <span className="flex h-3 items-center justify-center border-r border-[#e9e7e5]">
          <svg viewBox="0 0 20 12" className="h-3 w-5" fill="none">
            <rect x="1.500" y="2.500" width="10.500" height="6.500" stroke={BLUE} fill="#fff" />
            <path d="M15 .5h4M15 11.500h4M17 .5v11" stroke="#333" />
          </svg>
        </span>
        <span className="h-3 border-r border-[#e9e7e5]" />
        <span className="h-3 border-r border-[#e9e7e5]" />
        <span className="border-r border-[#e9e7e5] text-center">Average: ; Sum: 0</span>
        <div className="flex items-center gap-[3px] border-r border-[#e9e7e5] px-[5px]">
          <button type="button" aria-label="Zoom out"><svg viewBox="0 0 8 8" className="size-2"><path d="M1 4h6" stroke="#222" strokeWidth="1.400" /></svg></button>
          <input
            type="range"
            aria-label="Zoom"
            defaultValue={49}
            className="h-2 min-w-0 flex-1 appearance-none bg-transparent [&::-webkit-slider-runnable-track]:h-px [&::-webkit-slider-runnable-track]:bg-[#8c8c8c] [&::-webkit-slider-thumb]:-mt-[3px] [&::-webkit-slider-thumb]:h-[7px] [&::-webkit-slider-thumb]:w-[3px] [&::-webkit-slider-thumb]:appearance-none [&::-webkit-slider-thumb]:border [&::-webkit-slider-thumb]:border-[#444] [&::-webkit-slider-thumb]:bg-white"
          />
          <button type="button" aria-label="Zoom in"><svg viewBox="0 0 8 8" className="size-2"><path d="M0.500 4h7M4 .5v7" stroke="#222" strokeWidth="1.400" /></svg></button>
        </div>
        <span className="text-center">100%</span>
      </footer>
    </div>
  );
}
